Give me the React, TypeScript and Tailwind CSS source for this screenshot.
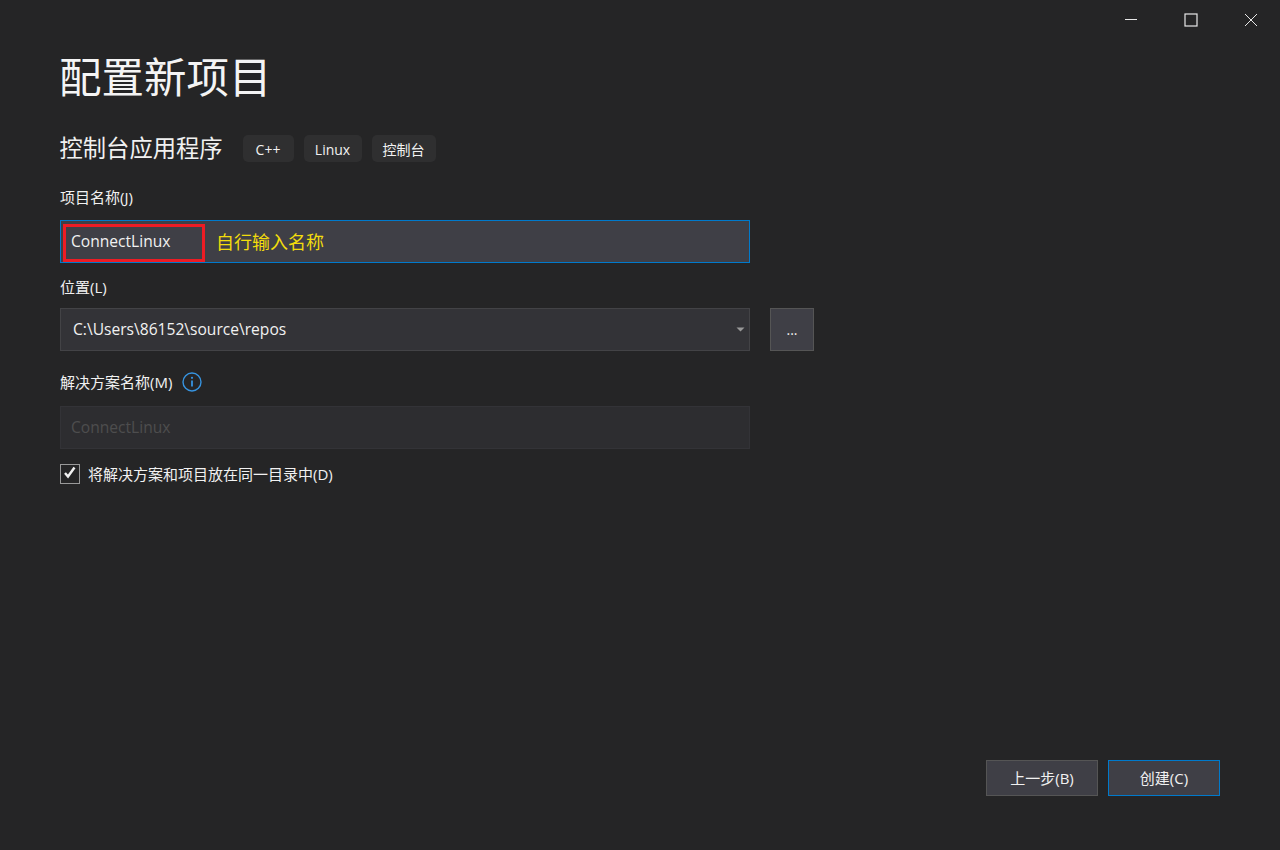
const font = '[font-family:"Open_Sans","Noto_Sans_CJK_SC",sans-serif]';

function Tag({ label, width }: { label: string; width: string }) {
  return (
    <span className={`${width} h-[27px] pt-[1px] flex items-center justify-center rounded-[5px] bg-[#2f2f30] text-[14px] text-[#f1f1f1]`}>
      {label}
    </span>
  );
}

function FieldLabel({ children }: { children: React.ReactNode }) {
  return <div className="text-[15px] leading-[20px] text-[#f1f1f1]">{children}</div>;
}

function WindowControls() {
  return (
    <div className="h-[40px] flex justify-end shrink-0">
      <button className="w-[60px] h-[40px] pl-[2px] flex items-center justify-center">
        <svg width="14" height="14" viewBox="0 0 14 14"><path d="M1 6.5h12" stroke="#e8e8e8" strokeWidth="1" /></svg>
      </button>
      <button className="w-[60px] h-[40px] pl-[2px] flex items-center justify-center">
        <svg width="14" height="14" viewBox="0 0 14 14"><rect x="1" y="1" width="12" height="12" fill="none" stroke="#e8e8e8" strokeWidth="1.2" /></svg>
      </button>
      <button className="w-[60px] h-[40px] pl-[2px] flex items-center justify-center">
        <svg width="14" height="14" viewBox="0 0 14 14"><path d="M1 1l12 12M13 1L1 13" stroke="#e8e8e8" strokeWidth="1" /></svg>
      </button>
    </div>
  );
}

export default function App() {
  return (
    <div className={`${font} w-[1280px] h-[850px] bg-[#252526] text-white flex flex-col overflow-hidden`}>
      <WindowControls />
      <div className="flex-1 flex flex-col px-[60px]">
        <h1 className="text-[42.5px] leading-[56px] mt-[9px] -ml-[1px] font-normal text-[#f4f4f4]">配置新项目</h1>

        <div className="flex items-center mt-[30px] h-[27px]">
          <span className="text-[23.3px] w-[183px] -ml-[0.5px] text-[#f1f1f1]">控制台应用程序</span>
          <div className="flex gap-[10px]">
            <Tag label="C++" width="w-[51px]" />
            <Tag label="Linux" width="w-[58px]" />
            <Tag label="控制台" width="w-[64px]" />
          </div>
        </div>

        <div className="mt-[25px]">
          <FieldLabel>项目名称(J)</FieldLabel>
        </div>
        <div className="relative mt-[13px] w-[690px] h-[43px] bg-[#3f3f46] border border-[#007acc] flex items-center pl-[10px] text-[15.6px] text-[#f1f1f1]">
          <span className="w-[146px]">ConnectLinux</span>
          <span className="text-[18px] mt-[1px] -ml-[1px] text-[#f2dc0c]">自行输入名称</span>
          <div className="absolute left-[2px] top-[3px] w-[142px] h-[38px] border-[3px] border-[#ed1c24]" />
        </div>

        <div className="mt-[14px]">
          <FieldLabel>位置(L)</FieldLabel>
        </div>
        <div className="flex gap-[20px] mt-[11px]">
          <div className="w-[690px] h-[43px] bg-[#333337] border border-[#434346] flex items-center justify-between pl-[12px] pr-[5px] text-[15.6px] text-[#f1f1f1]">
            <span>C:\Users\86152\source\repos</span>
            <svg width="9" height="5" viewBox="0 0 9 5" className="mr-[-1px]"><path d="M0.5 0.5h8L4.5 4.5z" fill="#999999" /></svg>
          </div>
          <button className="w-[44px] h-[43px] bg-[#3f3f46] border border-[#555555] flex items-center justify-center text-[14px] text-[#f1f1f1]">
            ...
          </button>
        </div>

        <div className="flex items-center gap-[10px] mt-[20px] h-[22px]">
          <FieldLabel>解决方案名称(M)</FieldLabel>
          <svg width="20" height="20" viewBox="0 0 20 20">
            <circle cx="10" cy="10" r="9" fill="none" stroke="#3794e0" strokeWidth="1.4" />
            <circle cx="10" cy="5.8" r="1.1" fill="#3794e0" />
            <path d="M10 8.6v6" stroke="#3794e0" strokeWidth="1.8" />
          </svg>
        </div>
        <div className="mt-[13px] w-[690px] h-[43px] bg-[#2d2d30] border border-[#333337] flex items-center pl-[10px] text-[15.6px] text-[#4d4d4e]">
          ConnectLinux
        </div>

        <label className="flex items-center gap-[8px] mt-[15px]">
          <span className="w-[20px] h-[20px] border border-[#999999] bg-[#252526] flex items-center justify-center">
            <svg width="14" height="14" viewBox="0 0 14 14" className="-mt-[2px]"><path d="M2 7l3 3.5 6.5-9" fill="none" stroke="#f1f1f1" strokeWidth="2.4" /></svg>
          </span>
          <span className="text-[15px] leading-[20px] text-[#f1f1f1]">将解决方案和项目放在同一目录中(D)</span>
        </label>

        <div className="mt-auto mb-[54px] flex justify-end gap-[10px]">
          <button className="w-[112px] h-[36px] bg-[#3f3f46] border border-[#555555] text-[15px] text-[#f1f1f1]">上一步(B)</button>
          <button className="w-[112px] h-[36px] bg-[#3f3f46] border border-[#007acc] text-[15px] text-[#f1f1f1]">创建(C)</button>
        </div>
      </div>
    </div>
  );
}
